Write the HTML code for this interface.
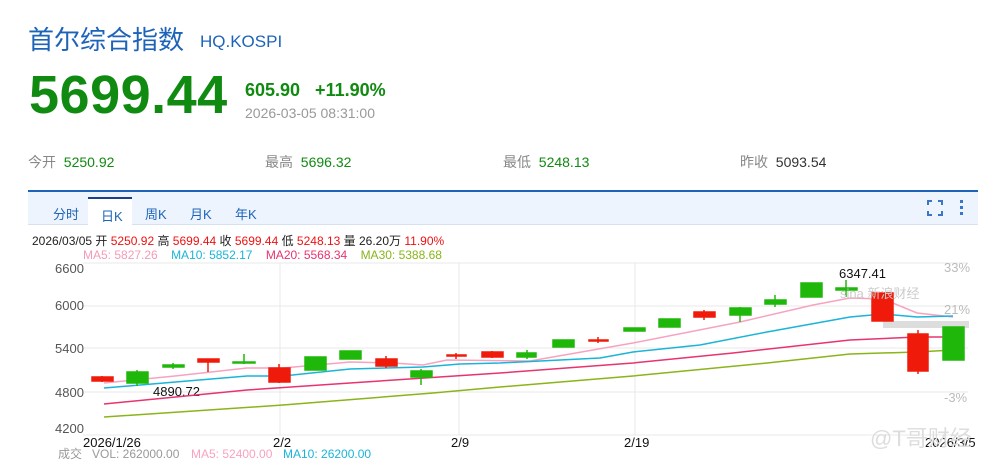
<!DOCTYPE html>
<html><head><meta charset="utf-8"><style>
body{margin:0;width:1000px;height:460px;overflow:hidden;background:#fff;font-family:"Liberation Sans","Noto Sans CJK SC",sans-serif;position:relative}
.a{position:absolute;white-space:nowrap}
</style></head><body>
<div class="a" style="left:28px;top:20px;font-size:26px;color:#1d64b8">首尔综合指数</div>
<div class="a" style="left:200px;top:32px;font-size:17px;color:#1d64b8">HQ.KOSPI</div>
<div class="a" style="left:29px;top:64px;font-size:54px;font-weight:bold;color:#118a11;letter-spacing:0.5px">5699.44</div>
<div class="a" style="left:245px;top:80px;font-size:18px;font-weight:bold;color:#118a11">605.90&nbsp;&nbsp;&nbsp;+11.90%</div>
<div class="a" style="left:245px;top:105px;font-size:14px;color:#999">2026-03-05 08:31:00</div>
<div class="a" style="left:28px;top:152px;font-size:14px;color:#888">今开 &nbsp;<span style="color:#118a11">5250.92</span></div>
<div class="a" style="left:265px;top:152px;font-size:14px;color:#888">最高 &nbsp;<span style="color:#118a11">5696.32</span></div>
<div class="a" style="left:503px;top:152px;font-size:14px;color:#888">最低 &nbsp;<span style="color:#118a11">5248.13</span></div>
<div class="a" style="left:740px;top:152px;font-size:14px;color:#888">昨收 &nbsp;<span style="color:#333">5093.54</span></div>
<div class="a" style="left:28px;top:190px;width:950px;height:2px;background:#1d64b8"></div>
<div class="a" style="left:28px;top:192px;width:950px;height:32px;background:#edf4fd;border-bottom:1px solid #d6e2f0"></div>
<div class="a" style="left:88px;top:197px;width:44px;height:28px;background:#fff;border-top:2px solid #1d3f8a"></div>
<div class="a" style="left:53px;top:204px;font-size:13px;color:#1d64b8">分时</div>
<div class="a" style="left:101px;top:206px;font-size:13px;color:#1d64b8">日K</div>
<div class="a" style="left:145px;top:204px;font-size:13px;color:#1d64b8">周K</div>
<div class="a" style="left:190px;top:204px;font-size:13px;color:#1d64b8">月K</div>
<div class="a" style="left:235px;top:204px;font-size:13px;color:#1d64b8">年K</div>
<svg class="a" style="left:926px;top:199px" width="50" height="20"><path d="M2 6V2H6M12 2H16V6M16 12V16H12M6 16H2V12" stroke="#3a76c8" stroke-width="2" fill="none"/><rect x="34" y="1" width="3" height="3" fill="#3a76c8"/><rect x="34" y="7" width="3" height="3" fill="#3a76c8"/><rect x="34" y="13" width="3" height="3" fill="#3a76c8"/></svg>
<div class="a" style="left:32px;top:232px;font-size:12px;color:#222">2026/03/05 开 <span style="color:#e11">5250.92</span> 高 <span style="color:#e11">5699.44</span> 收 <span style="color:#e11">5699.44</span> 低 <span style="color:#e11">5248.13</span> 量 26.20万 <span style="color:#e11">11.90%</span></div>
<div class="a" style="left:83px;top:248px;font-size:12px"><span style="color:#f59ab8">MA5: 5827.26</span>&nbsp;&nbsp;&nbsp;&nbsp;<span style="color:#1ab4d8">MA10: 5852.17</span>&nbsp;&nbsp;&nbsp;&nbsp;<span style="color:#e8336e">MA20: 5568.34</span>&nbsp;&nbsp;&nbsp;&nbsp;<span style="color:#8ab41a">MA30: 5388.68</span></div>
<svg class="a" style="left:0;top:0" width="1000" height="460" font-family="Liberation Sans,sans-serif">
<g stroke="#e8e8e8" stroke-width="1">
<line x1="83" y1="263" x2="968" y2="263"/><line x1="83" y1="306" x2="968" y2="306"/><line x1="83" y1="348" x2="968" y2="348"/><line x1="83" y1="392" x2="968" y2="392"/><line x1="83" y1="435" x2="968" y2="435"/>
<line x1="280" y1="263" x2="280" y2="435"/><line x1="459" y1="263" x2="459" y2="435"/><line x1="635" y1="263" x2="635" y2="435"/>
</g>
<g font-size="13" fill="#555"><text x="55" y="273">6600</text><text x="55" y="310">6000</text><text x="55" y="353">5400</text><text x="55" y="397">4800</text><text x="55" y="433">4200</text></g>
<g font-size="13" fill="#bbb"><text x="944" y="272">33%</text><text x="944" y="314">21%</text><text x="944" y="402">-3%</text></g>
<g font-size="13" fill="#111"><text x="83" y="447">2026/1/26</text><text x="273" y="447">2/2</text><text x="451" y="447">2/9</text><text x="624" y="447">2/19</text><text x="925" y="447">2026/3/5</text>
<text x="153" y="396">4890.72</text><text x="839" y="278">6347.41</text></g>
<rect x="883" y="321" width="86" height="7" fill="#ddd"/>
<g fill="none" stroke-width="1.5">
<polyline stroke="#f7a3bf" points="104,383 175,376 247,368 283,368 350,362 393,363 423,365 447,360 530,361 633,343 740,322 813,305 850,298 883,299 917,313 953,317"/>
<polyline stroke="#1ab4d8" points="104,388 247,376 283,376 350,369 423,367 460,364 500,363 600,358 633,352 700,345 767,332 850,317 883,314 917,317 953,316"/>
<polyline stroke="#e8336e" points="104,404 247,390 350,383 500,373 633,363 733,353 850,340 917,337 953,337"/>
<polyline stroke="#8ab41a" points="104,417 283,405 433,393 500,387 633,376 767,363 850,354 917,352 953,350"/>
</g>
<g stroke-width="1.5">
<g stroke="#f01a0a" fill="#f01a0a">
<line x1="102" y1="376" x2="102" y2="382"/><rect x="92" y="377" width="21" height="4"/>
<line x1="208" y1="359" x2="208" y2="372"/><rect x="198" y="359" width="21" height="3"/>
<line x1="279" y1="364" x2="279" y2="383"/><rect x="269" y="368" width="21" height="14"/>
<line x1="386" y1="356" x2="386" y2="368"/><rect x="376" y="359" width="21" height="7"/>
<line x1="456" y1="353" x2="456" y2="359"/><rect x="447" y="355" width="19" height="1"/>
<line x1="492" y1="351" x2="492" y2="358"/><rect x="482" y="352" width="21" height="5"/>
<line x1="598" y1="337" x2="598" y2="343"/><rect x="589" y="340" width="19" height="1"/>
<line x1="704" y1="310" x2="704" y2="320"/><rect x="694" y="312" width="21" height="5"/>
<rect x="872" y="293" width="21" height="28"/>
<line x1="918" y1="330" x2="918" y2="374"/><rect x="908" y="334" width="20" height="37"/>
</g>
<g stroke="#1fb80a" fill="#1fb80a">
<line x1="137" y1="370" x2="137" y2="386"/><rect x="127" y="372" width="21" height="11"/>
<line x1="173" y1="363" x2="173" y2="369"/><rect x="163" y="365" width="21" height="2"/>
<line x1="244" y1="354" x2="244" y2="364"/><rect x="233" y="362" width="22" height="1"/>
<rect x="305" y="357" width="21" height="13"/>
<rect x="340" y="351" width="21" height="8"/>
<line x1="421" y1="369" x2="421" y2="385"/><rect x="411" y="371" width="21" height="6"/>
<line x1="527" y1="350" x2="527" y2="359"/><rect x="517" y="353" width="19" height="4"/>
<rect x="553" y="340" width="21" height="7"/>
<rect x="624" y="328" width="21" height="3"/>
<rect x="659" y="319" width="21" height="8"/>
<line x1="740" y1="307" x2="740" y2="322"/><rect x="730" y="308" width="21" height="7"/>
<line x1="775" y1="295" x2="775" y2="307"/><rect x="765" y="300" width="21" height="4"/>
<rect x="801" y="283" width="21" height="14"/>
<line x1="846" y1="280" x2="846" y2="297"/><rect x="836" y="288" width="21" height="2"/>
<rect x="943" y="327" width="21" height="33"/>
</g></g>
<text x="840" y="298" font-size="13" fill="#ccc">sina 新浪财经</text>
<text x="870" y="446" font-size="22" fill="#ddd">@T哥财经</text>
<g font-size="12"><text x="58" y="458" fill="#999">成交</text><text x="92" y="458" fill="#999">VOL: 262000.00</text><text x="191" y="458" fill="#f7a3bf">MA5: 52400.00</text><text x="283" y="458" fill="#1ab4d8">MA10: 26200.00</text></g>
</svg>
</body></html>
